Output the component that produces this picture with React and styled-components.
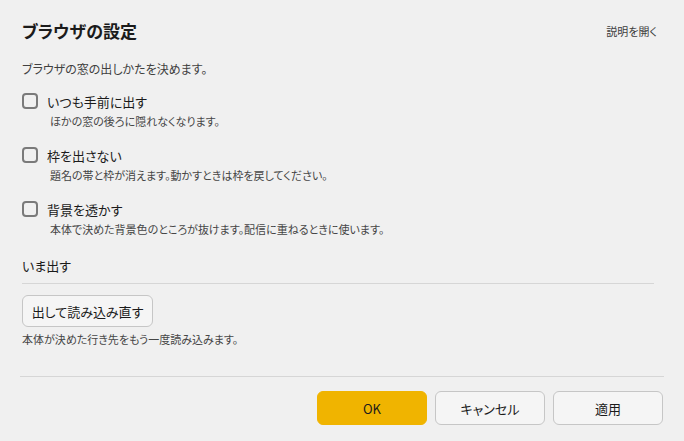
import React from 'react';
import styled, { createGlobalStyle } from 'styled-components';

const GlobalStyle = createGlobalStyle`
  html, body {
    margin: 0;
    padding: 0;
    background: #f0f0f0;
  }
  body {
    font-family: "Noto Sans CJK JP", "Noto Sans", sans-serif;
    font-feature-settings: "palt";
    color: #1b1b1b;
  }
  * { box-sizing: border-box; }
`;

const Dialog = styled.div`
  width: 684px;
  height: 441px;
  display: flex;
  flex-direction: column;
  background: #f0f0f0;
`;

const Header = styled.div`
  display: flex;
  align-items: center;
  justify-content: space-between;
  padding: 19px 27px 0 22px;
`;

const Title = styled.h1`
  margin: 0;
  font-size: 17px;
  line-height: 24px;
  font-weight: 700;
  color: #1b1b1b;
`;

const HelpLink = styled.a`
  font-size: 11px;
  line-height: 16px;
  color: #3d3d3d;
  text-decoration: none;
  cursor: pointer;
`;

const Body = styled.div`
  padding: 0 30px 0 22px;
  display: flex;
  flex-direction: column;
`;

const Lead = styled.p`
  margin: 17px 0 0;
  font-size: 12px;
  line-height: 18px;
  color: #404040;
`;

const Options = styled.div`
  margin-top: 13px;
  display: flex;
  flex-direction: column;
  gap: 16px;
`;

const Option = styled.div`
  display: flex;
  flex-direction: column;
`;

const CheckRow = styled.label`
  display: flex;
  align-items: center;
  gap: 9px;
  height: 20px;
  font-size: 13px;
  color: #1b1b1b;
  cursor: pointer;
`;

const Box = styled.span`
  width: 16px;
  height: 16px;
  border: 2px solid #7a7a7a;
  border-radius: 4px;
  background: ${p => (p.$checked ? '#f0b400' : 'transparent')};
  flex-shrink: 0;
`;

const Hint = styled.div`
  margin: ${p => (p.$indent ? '2px 0 0 28px' : '4px 0 0')};
  font-size: 11px;
  line-height: 16px;
  color: #454545;
`;

const SectionTitle = styled.div`
  margin-top: 19px;
  padding-bottom: 7px;
  border-bottom: 1px solid #d6d6d6;
  font-size: 13px;
  line-height: 20px;
  color: #1b1b1b;
`;

const Button = styled.button`
  font-family: inherit;
  font-feature-settings: "palt";
  font-size: 13px;
  color: #1b1b1b;
  height: ${p => p.$h || 32}px;
  width: ${p => (p.$w ? `${p.$w}px` : 'auto')};
  padding: 0;
  border-radius: 6px;
  border: 1px solid ${p => (p.$primary ? '#f0b400' : '#c6c6c6')};
  background: ${p => (p.$primary ? '#f0b400' : '#f5f5f5')};
  cursor: pointer;
`;

const ReloadWrap = styled.div`
  margin-top: 11px;
  display: flex;
`;

const Footer = styled.div`
  margin: auto 20px 0;
  padding: 14px 1px 16px 0;
  border-top: 1px solid #d6d6d6;
  display: flex;
  justify-content: flex-end;
  gap: 8px;
`;

const options = [
  { label: 'いつも手前に出す', hint: 'ほかの窓の後ろに隠れなくなります。' },
  { label: '枠を出さない', hint: '題名の帯と枠が消えます。動かすときは枠を戻してください。' },
  { label: '背景を透かす', hint: '本体で決めた背景色のところが抜けます。配信に重ねるときに使います。' },
];

export default function App() {
  return (
    <>
      <GlobalStyle />
      <Dialog>
        <Header>
          <Title>ブラウザの設定</Title>
          <HelpLink>説明を開く</HelpLink>
        </Header>
        <Body>
          <Lead>ブラウザの窓の出しかたを決めます。</Lead>
          <Options>
            {options.map(o => (
              <Option key={o.label}>
                <CheckRow>
                  <Box />
                  {o.label}
                </CheckRow>
                <Hint $indent>{o.hint}</Hint>
              </Option>
            ))}
          </Options>
          <SectionTitle>いま出す</SectionTitle>
          <ReloadWrap>
            <Button $w={131}>出して読み込み直す</Button>
          </ReloadWrap>
          <Hint>本体が決めた行き先をもう一度読み込みます。</Hint>
        </Body>
        <Footer>
          <Button $primary $w={110} $h={34}>OK</Button>
          <Button $w={110} $h={34}>キャンセル</Button>
          <Button $w={110} $h={34}>適用</Button>
        </Footer>
      </Dialog>
    </>
  );
}
